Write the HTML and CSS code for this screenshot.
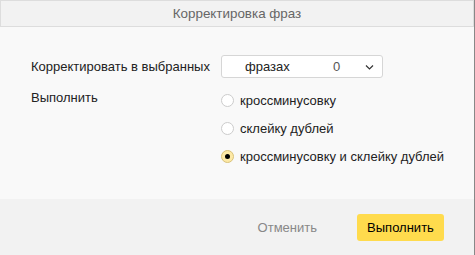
FILE: index.html
```html
<!DOCTYPE html>
<html lang="ru">
<head>
<meta charset="UTF-8">
<title>Корректировка фраз</title>
<link rel="stylesheet" href="styles.css">
</head>
<body>

<div class="dialog">
  <header class="dialog-header">Корректировка фраз</header>

  <section class="dialog-body">
    <div class="row">
      <div class="row-label">Корректировать в выбранных</div>
      <div class="select">
        <span class="select-text">фразах</span>
        <span class="select-count">0</span>
        <svg class="select-arrow" width="9" height="6" viewBox="0 0 9 6"><path d="M1 1.5l3.5 3.5 3.5-3.5" fill="none" stroke="#333" stroke-width="1.2"/></svg>
      </div>
    </div>

    <div class="row row-top">
      <div class="row-label">Выполнить</div>
      <div class="radio-group">
        <label class="radio"><span class="radio-box"></span>кроссминусовку</label>
        <label class="radio"><span class="radio-box"></span>склейку дублей</label>
        <label class="radio radio-checked"><span class="radio-box"></span>кроссминусовку и склейку дублей</label>
      </div>
    </div>
  </section>

  <footer class="dialog-footer">
    <button class="btn btn-cancel">Отменить</button>
    <button class="btn btn-action">Выполнить</button>
  </footer>
</div>

</body>
</html>
```

FILE: styles.css
```css
* { margin: 0; padding: 0; box-sizing: border-box; }
body { font-family: "Liberation Sans", Arial, sans-serif; font-size: 13px; color: #222; background: #fff; }
.dialog { width: 475px; height: 255px; border-right: 1px solid #888; background: #f9f9f9; display: flex; flex-direction: column; }
.dialog-header { height: 27px; line-height: 25px; text-align: center; background: #f2f2f2; border: 1px solid #ddd; color: #666; font-size: 13.4px; }
.dialog-body { flex: 1; padding: 28px 0 0 31px; }
.row { display: flex; align-items: center; }
.row-top { align-items: flex-start; margin-top: 12px; }
.row-label { width: 190px; }
.select { width: 162px; height: 23px; border: 1px solid #d6d6d6; border-radius: 3px; background: #fff; display: flex; align-items: center; padding: 0 0 0 23px; }
.select-text { width: 88px; }
.select-count { width: 32px; color: #555; }
.select-arrow { display: block; }
.radio-group { display: flex; flex-direction: column; gap: 12px; margin-top: 2px; }
.radio { display: flex; align-items: center; height: 16px; }
.radio-box { width: 13px; height: 13px; border: 1px solid #ccc; border-radius: 50%; background: #fff; margin-right: 6px; display: flex; align-items: center; justify-content: center; }
.radio-checked .radio-box { background: #fde9a6; border-color: #d9c27a; }
.radio-checked .radio-box::after { content: ""; width: 5px; height: 5px; border-radius: 50%; background: #000; }
.dialog-footer { height: 56px; background: #f2f2f2; display: flex; justify-content: flex-end; align-items: center; padding-right: 30px; }
.btn { font-family: inherit; font-size: 13px; border: none; background: none; height: 27px; cursor: pointer; }
.btn-cancel { color: #888; margin-right: 40px; }
.btn-action { width: 87px; background: #ffdb4d; border-radius: 3px; color: #000; }
```
